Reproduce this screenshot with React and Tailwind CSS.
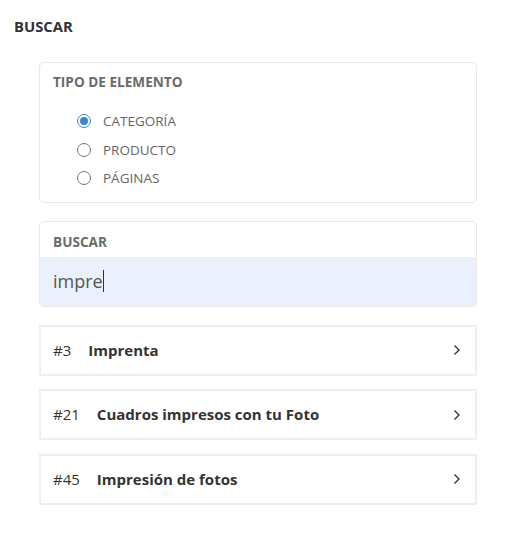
const options = ["CATEGORÍA", "PRODUCTO", "PÁGINAS"];

const results = [
    { id: 3, name: "Imprenta" },
    { id: 21, name: "Cuadros impresos con tu Foto" },
    { id: 45, name: "Impresión de fotos" },
];

const Radio = ({ checked }) => {
    return (
        <span className={"w-[14px] h-[14px] rounded-full border flex items-center justify-center " + (checked ? "border-[#3a87d0] border-[1.5px]" : "border-[#777]")}>
            {checked && <span className="w-[8px] h-[8px] rounded-full bg-[#3a87d0]"></span>}
        </span>
    )
}

const App = () => {
    return (
        <div className="w-[515px] h-[535px] bg-white font-['Open_Sans',sans-serif] pt-[16px]">
            <h1 className="pl-[14px] text-[14.8px] leading-[20px] font-bold text-[#333]">BUSCAR</h1>

            <div className="ml-[39px] w-[438px] mt-[26px] flex flex-col">
                {/* tipo de elemento */}
                <div className="border border-[#e8e8e8] rounded-[5px] pt-[11px] pb-[9px] px-[13px]">
                    <h2 className="text-[13.6px] leading-[16px] font-bold text-[#6b6b6b]">TIPO DE ELEMENTO</h2>
                    <div className="mt-[17px] ml-[24px] flex flex-col">
                        {
                            options.map((opt, i) => {
                                return <div key={i} className="h-[28.5px] flex items-center gap-[12px]">
                                    <Radio checked={i == 0} />
                                    <span className="text-[13.5px] text-[#666]">{opt}</span>
                                </div>
                            })
                        }
                    </div>
                </div>

                {/* buscar */}
                <div className="mt-[18px] border border-[#e8e8e8] rounded-[5px] overflow-hidden">
                    <div className="px-[13px] pt-[11px] pb-[6px] text-[13.6px] leading-[18px] font-bold text-[#6b6b6b]">BUSCAR</div>
                    <div className="h-[49px] bg-[#ebf1fc] px-[13px] flex items-center text-[18px] text-[#555]">
                        impre<span className="w-[1px] h-[22px] bg-[#333]"></span>
                    </div>
                </div>

                {/* results */}
                <div className="mt-[18px] flex flex-col gap-[13.5px]">
                    {
                        results.map((item, i) => {
                            return <div key={i} className="h-[51px] border-2 border-[#eee] pl-[12px] pr-[14px] flex items-center text-[#333]">
                                <span className="text-[15px] mr-[17px]">#{item.id}</span>
                                <span className="text-[15px] font-bold flex-1">{item.name}</span>
                                <svg width="8" height="12" viewBox="0 0 8 12" fill="none">
                                    <path d="M1.5 1.5 L6 6 L1.5 10.5" stroke="#333" strokeWidth="1.4" />
                                </svg>
                            </div>
                        })
                    }
                </div>
            </div>
        </div>
    )
}

export default App;
